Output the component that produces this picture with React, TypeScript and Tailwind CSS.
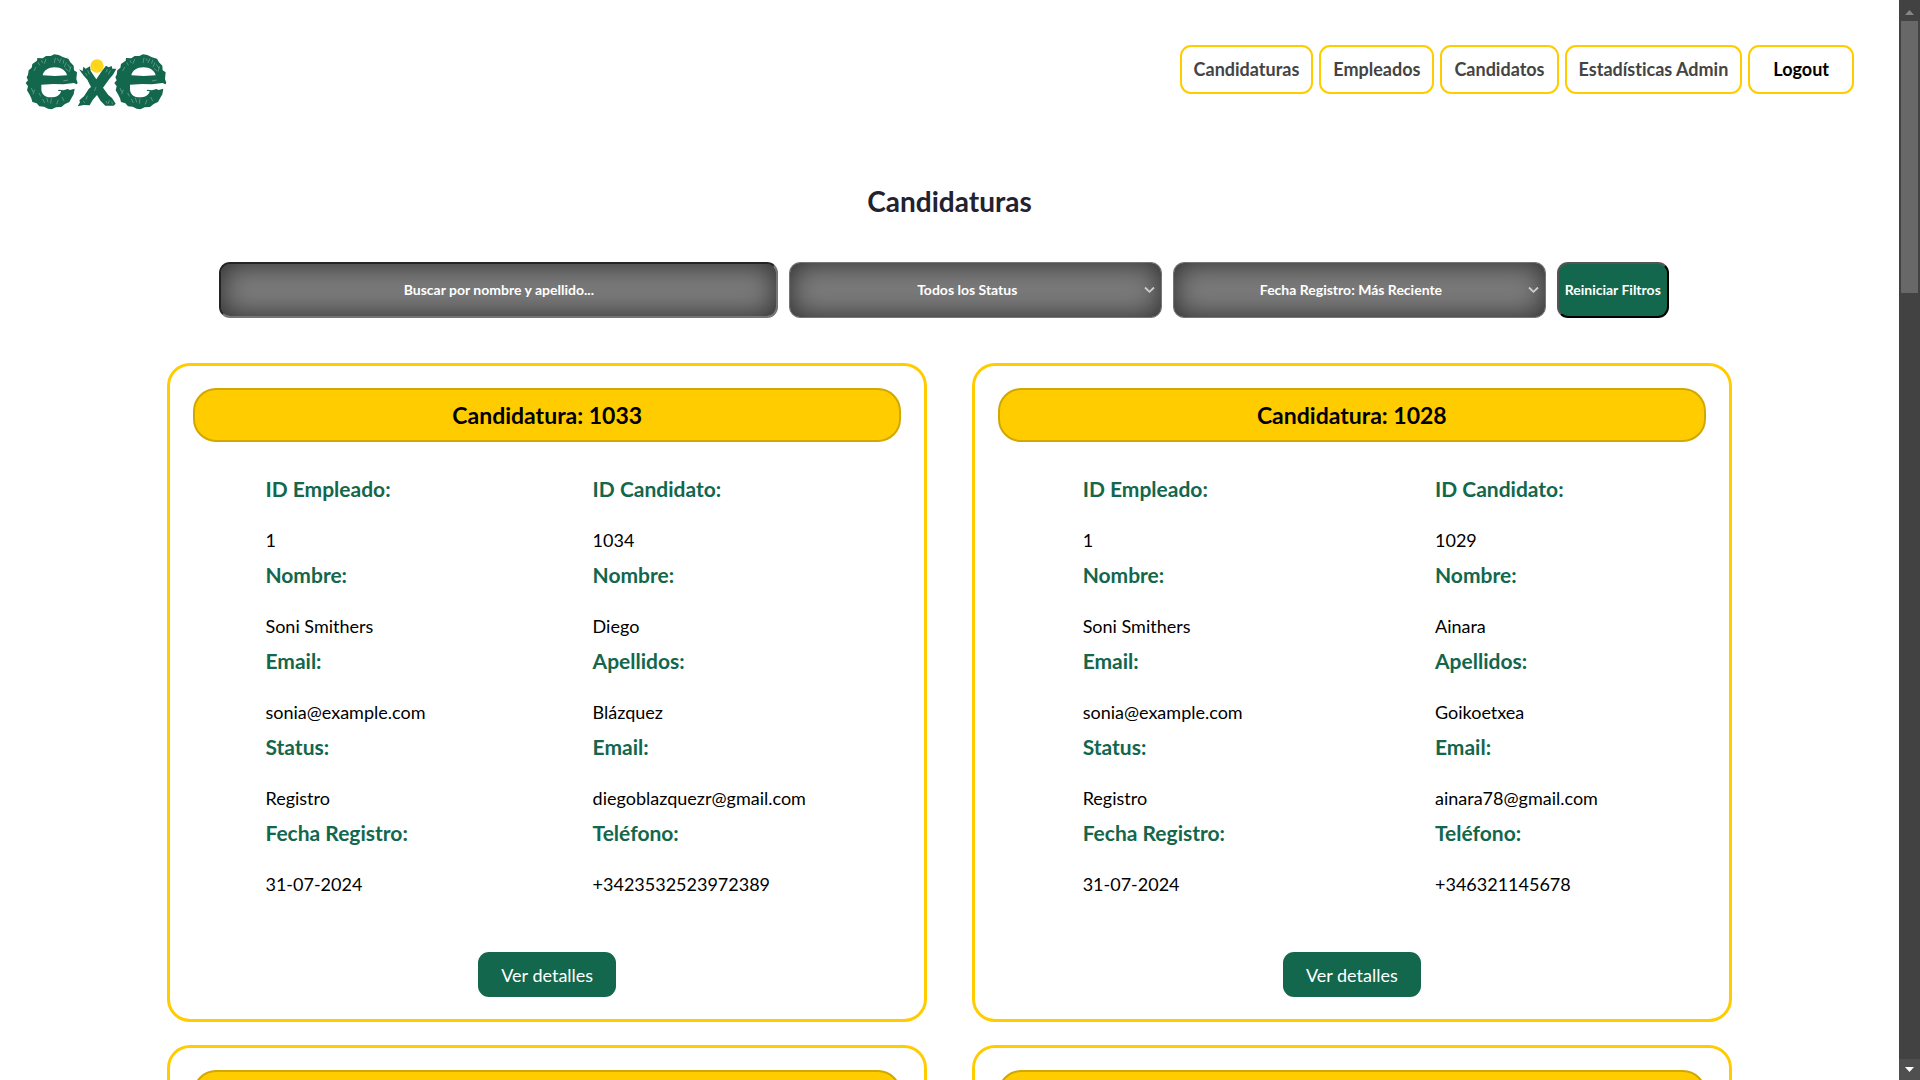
import React from "react";

type Field = { label: string; value: string };
type Candidatura = { id: number; empleado: Field[]; candidato: Field[] };

const empleado: Field[] = [
  { label: "ID Empleado:", value: "1" },
  { label: "Nombre:", value: "Soni Smithers" },
  { label: "Email:", value: "sonia@example.com" },
  { label: "Status:", value: "Registro" },
  { label: "Fecha Registro:", value: "31-07-2024" },
];

const candidato = (id: string, nombre: string, apellidos: string, email: string, telefono: string): Field[] => [
  { label: "ID Candidato:", value: id },
  { label: "Nombre:", value: nombre },
  { label: "Apellidos:", value: apellidos },
  { label: "Email:", value: email },
  { label: "Teléfono:", value: telefono },
];

const diego = candidato("1034", "Diego", "Blázquez", "diegoblazquezr@gmail.com", "+3423532523972389");
const ainara = candidato("1029", "Ainara", "Goikoetxea", "ainara78@gmail.com", "+346321145678");

const candidaturas: Candidatura[] = [
  { id: 1033, empleado, candidato: diego },
  { id: 1028, empleado, candidato: ainara },
  { id: 1027, empleado, candidato: diego },
  { id: 1026, empleado, candidato: ainara },
];

const LETTER_E =
  "M233 160L229 148L231 128L222 122L221 108L211 98L205 87L190 83L176 76L163 74L152 79L138 79L128 86L112 85L111 93L97 103L95 114L86 122L84 135L80 143L84 152L77 160L84 170L81 182L88 194L94 206L97 217L110 221L118 230L132 231L144 237L155 239L168 233L184 232L195 223L208 217L215 204L221 194L224 177L210 181L203 178L190 182L176 180L174 184L183 184C181 196 170 203 152 203C134 203 124 192 124 178L124 165L160 163L190 164L222 160L230 164ZM128 137L165 139L201 137C198 123 184 113 164 113C145 113 131 122 128 137Z";
const E_SCRATCHES =
  "M114 98l5 9M124 92l4 8M138 88l-5 14M166 84l-3 16M172 86l4 8M184 86l-6 14M192 90l-3 12M199 98l-6 14M203 104l8 12M196 116l9 8M213 110l-5 16M108 112l-6 12M94 175l5 12M104 180l-5 14M117 190l5 10M128 208l6 12M140 204l4 14M154 206l-2 16M175 210l-5 14M186 202l6 12M190 154l14-3";

function Logo() {
  return (
    <svg viewBox="75 70 429 174" className="h-[58px] w-[143px]" role="img" aria-label="exe">
      {[0, 266].map((x) => (
        <g key={x} transform={`translate(${x} 0)`}>
          <path d={LETTER_E} fill="#12674c" fillRule="evenodd" />
          <path d={E_SCRATCHES} stroke="#fff" strokeOpacity=".45" strokeWidth="2" fill="none" />
        </g>
      ))}
      <path
        d="M237 119L248 124L250 111L257 117L270 110L272 124L289 149L304 126L318 108L326 113L335 109L337 117L349 117L340 134L328 148L309 174L325 196L336 205L347 222L341 228L316 228L302 214L291 196L278 211L269 227L251 226L233 230L240 218L238 212L252 200L266 178L273 172L262 150L250 137Z"
        fill="#12674c"
      />
      <path
        d="M262 198l-4 12M250 214l5 6M318 214l4 8M328 212l-3 10M335 216l3 8M322 118l-4 10M331 122l-6 12M263 122l5 12M256 130l5 8M288 172l-5 12"
        stroke="#fff"
        strokeOpacity=".45"
        strokeWidth="2"
        fill="none"
      />
      <circle cx="291" cy="109" r="20" fill="#fdd61c" />
      <path d="M283 120l-4-7M300 118l5-7M286 124l8 1" stroke="#fff" strokeOpacity=".5" strokeWidth="1" />
    </svg>
  );
}

const links = ["Candidaturas", "Empleados", "Candidatos", "Estadísticas Admin"];

function FilterSelect({ label, option }: { label: string; option: string }) {
  return (
    <div className="relative min-w-0">
      <select
        aria-label={label}
        className="h-full w-full appearance-none rounded-[11px] border border-[#767676] bg-[#7b7b7b] pr-[17px] text-center text-sm font-bold text-white shadow-[inset_0_0_28px_rgba(0,0,0,0.65)]"
      >
        <option>{option}</option>
      </select>
      <svg
        viewBox="0 0 11 7"
        className="pointer-events-none absolute top-1/2 right-[7px] h-[7px] w-[11px] -translate-y-1/2"
      >
        <path d="M1 1L5.5 5.3L10 1" stroke="#cfcfcf" strokeWidth="1.8" fill="none" />
      </svg>
    </div>
  );
}

function FieldList({ fields }: { fields: Field[] }) {
  return (
    <dl className="mr-[23px]">
      {fields.map((f) => (
        <div key={f.label} className="h-[86px]">
          <dt className="text-[21px] leading-[30px] font-bold text-[#12674c]">{f.label}</dt>
          <dd className="mt-[22px] text-lg leading-7">{f.value}</dd>
        </div>
      ))}
    </dl>
  );
}

function Card({ item }: { item: Candidatura }) {
  return (
    <article className="flex w-[40%] flex-col rounded-[23px] border-3 border-[#ffcc00] px-[23px] py-[22px]">
      <h2 className="rounded-[23px] border-2 border-[#d1a700] bg-[#ffcc00] py-[9px] text-center text-[23px] leading-8 font-bold">
        Candidatura: {item.id}
      </h2>
      <div className="mt-8 flex justify-around">
        <FieldList fields={item.empleado} />
        <FieldList fields={item.candidato} />
      </div>
      <button className="mt-12 h-[45px] self-center rounded-[11px] bg-[#12674c] px-[23px] text-lg text-white">
        Ver detalles
      </button>
    </article>
  );
}

export default function App() {
  return (
    <div className="flex h-screen overflow-hidden bg-white font-['Lato',sans-serif] text-black [font-variant-ligatures:no-common-ligatures]">
      <div className="min-w-0 flex-1 overflow-y-auto [scrollbar-width:none]">
        <header className="flex items-start justify-between pt-[45px] pr-[45px] pl-[25px]">
          <a href="#inicio" className="mt-2">
            <Logo />
          </a>
          <nav className="flex gap-1.5">
            {links.map((l) => (
              <a
                key={l}
                href="#"
                className="flex h-[49px] items-center rounded-[11px] border-2 border-[#ffcc00] px-3 pb-0.5 text-lg font-bold text-[#444444]"
              >
                {l}
              </a>
            ))}
            <button className="h-[49px] rounded-[11px] border-2 border-[#ffcc00] px-[23px] pb-0.5 text-lg font-bold">
              Logout
            </button>
          </nav>
        </header>

        <main className="pb-12">
          <h1 className="mt-[70px] text-center text-[28px] leading-10 font-bold text-[#222230]">Candidaturas</h1>

          <form className="mx-auto mt-[41px] grid h-14 w-[76.9%] grid-cols-[30fr_20fr_20fr_6fr] gap-[11px] pr-[11px]">
            <input
              type="text"
              aria-label="Buscar por nombre y apellido"
              placeholder="Buscar por nombre y apellido..."
              className="min-w-0 rounded-[11px] border-2 border-t-[#242424] border-r-[#767676] border-b-[#767676] border-l-[#242424] bg-[#7b7b7b] text-center text-sm font-bold text-white shadow-[inset_0_0_28px_rgba(0,0,0,0.65)] placeholder:text-white"
            />
            <FilterSelect label="Status" option="Todos los Status" />
            <FilterSelect label="Orden" option="Fecha Registro: Más Reciente" />
            <button
              type="button"
              className="min-w-0 rounded-[11px] border-2 border-t-[#555555] border-r-black border-b-black border-l-[#555555] bg-[#12674c] text-sm font-bold whitespace-nowrap text-white"
            >
              Reiniciar Filtros
            </button>
          </form>

          <section className="mt-[45px] flex flex-wrap justify-center gap-x-[45px] gap-y-[23px]">
            {candidaturas.map((c) => (
              <Card key={c.id} item={c} />
            ))}
          </section>
        </main>
      </div>

      <div aria-hidden="true" className="flex w-[21px] shrink-0 flex-col items-center bg-[#424242]">
        <div className="flex h-[21px] shrink-0 items-center justify-center">
          <svg viewBox="0 0 9 5" className="mt-1 h-[5px] w-[9px]">
            <path d="M0 5L4.5 0L9 5Z" fill="#868686" />
          </svg>
        </div>
        <div className="h-[272px] w-[17px] bg-[#686868]" />
        <div className="mt-auto flex h-[21px] w-full shrink-0 items-center justify-center bg-[#4f4f4f]">
          <svg viewBox="0 0 9 5" className="h-[5px] w-[9px]">
            <path d="M0 0L4.5 5L9 0Z" fill="#fff" />
          </svg>
        </div>
      </div>
    </div>
  );
}
